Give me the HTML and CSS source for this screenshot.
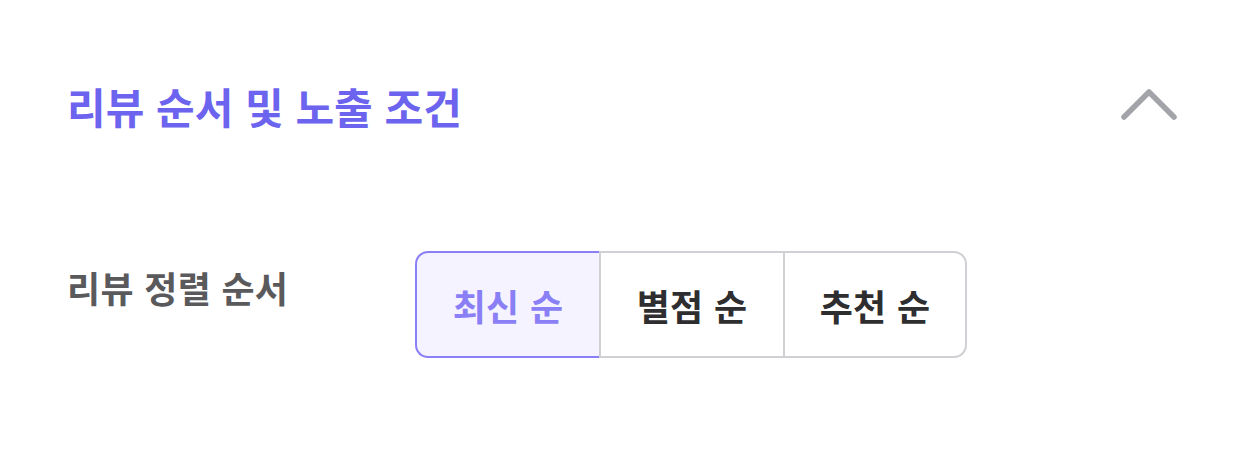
FILE: index.html
```html
<!DOCTYPE html>
<html lang="ko">
<head>
    <meta charset="UTF-8">
    <title>리뷰 순서 및 노출 조건</title>
    <link rel="stylesheet" href="styles.css">
</head>
<body>
    <section class="panel">
        <header class="panel-head">
            <h2 class="panel-title">리뷰 순서 및 노출 조건</h2>
            <button class="toggle" aria-label="접기">
                <svg width="58" height="34" viewBox="0 0 58 34">
                    <polyline points="4,29 29,4 54,29" fill="none" stroke="#a3a3aa" stroke-width="5.5" stroke-linecap="round" stroke-linejoin="round"/>
                </svg>
            </button>
        </header>

        <div class="row">
            <span class="row-label">리뷰 정렬 순서</span>
            <div class="segment">
                <button class="seg-btn active">최신 순</button>
                <button class="seg-btn">별점 순</button>
                <button class="seg-btn">추천 순</button>
            </div>
        </div>
    </section>
</body>
</html>
```

FILE: styles.css
```css
/* Page */
body {
    margin: 0;
    background: #fff;
    font-family: "Noto Sans CJK KR", "Noto Sans", sans-serif;
}

.panel {
    padding: 80px 76px 0 67px;
}

/* Header */
.panel-head {
    display: flex;
    justify-content: space-between;
    align-items: center;
    height: 50px;
}

.panel-title {
    margin: 0;
    font-size: 42px;
    font-weight: 700;
    color: #6c63ee;
    letter-spacing: 0;
}

.toggle {
    background: none;
    border: none;
    padding: 0;
    display: flex;
    cursor: pointer;
}

/* Sort row */
.row {
    display: flex;
    align-items: flex-start;
    margin-top: 121px;
}

.row-label {
    width: 348px;
    font-size: 36px;
    font-weight: 700;
    color: #5a5a5c;
    letter-spacing: 0.3px;
    line-height: 1;
    padding-top: 18px;
}

.segment {
    display: flex;
}

.seg-btn {
    width: 184px;
    height: 107px;
    margin: 0;
    background: #fff;
    border: 2px solid #cfcfd4;
    border-right-width: 0;
    font-family: inherit;
    font-size: 36px;
    font-weight: 700;
    letter-spacing: 0.3px;
    color: #2e2e30;
    cursor: pointer;
}

.seg-btn:first-child {
    border-radius: 13px 0 0 13px;
}

.seg-btn:last-child {
    border-right-width: 2px;
    border-radius: 0 13px 13px 0;
}

.seg-btn.active {
    background: #f5f3ff;
    border-color: #8a7ff7;
    color: #8a7ff5;
}
```
